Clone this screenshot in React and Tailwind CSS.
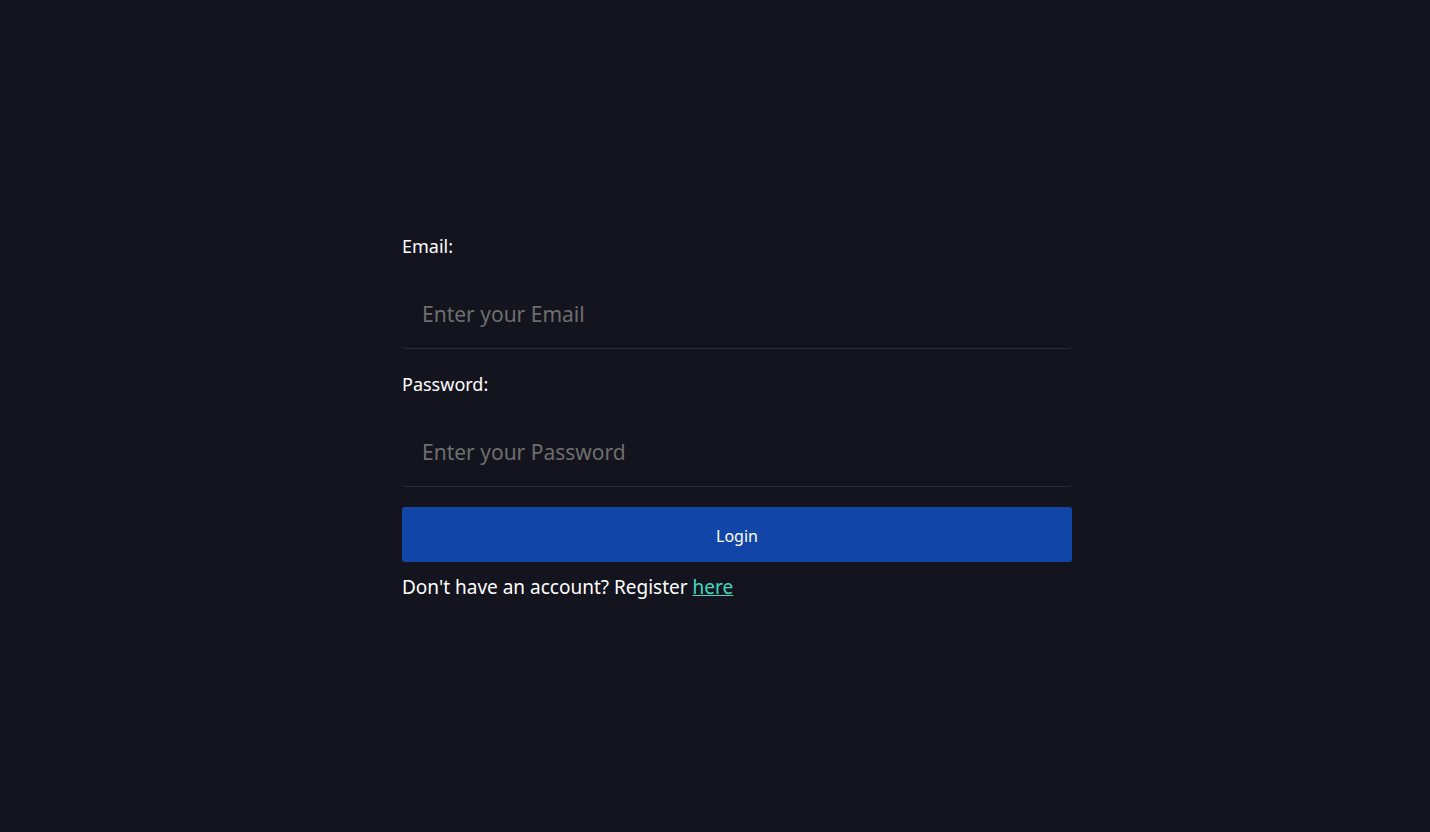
import React, { useState } from 'react';

const Login = () => {
  const [formData, setFormData] = useState({ email: '', password: '' });

  const handleInputChange = (e) => {
    const { name, value } = e.target;
    setFormData(prev => ({ ...prev, [name]: value }));
  };

  const handleSubmit = (e) => {
    e.preventDefault();
  };

  return (
    <div className="min-h-screen bg-[#14141e] flex items-center justify-center pl-[44px] font-['Noto_Sans',sans-serif]">
      <form onSubmit={handleSubmit} className="w-[670px] flex flex-col">
        <label className="text-white text-[18px] leading-6 mb-[22px]">Email:</label>
        <input
          type="email"
          name="email"
          value={formData.email}
          onChange={handleInputChange}
          placeholder="Enter your Email"
          className="h-[69px] px-5 bg-transparent text-white text-[21px] border-b border-[#2a2a38] rounded-[4px] outline-none placeholder:text-[#6e6e6e]"
        />

        <label className="text-white text-[18px] leading-6 mt-[23px] mb-[22px]">Password:</label>
        <input
          type="password"
          name="password"
          value={formData.password}
          onChange={handleInputChange}
          placeholder="Enter your Password"
          className="h-[69px] px-5 bg-transparent text-white text-[21px] border-b border-[#2a2a38] rounded-[4px] outline-none placeholder:text-[#6e6e6e]"
        />

        <button
          type="submit"
          className="mt-5 h-[55px] pt-[3px] bg-[#1146a8] text-white text-[16px] rounded-[3px]"
        >
          Login
        </button>

        <p className="mt-[13px] text-white text-[19px] leading-6">
          Don't have an account? Register{' '}
          <a href="#" className="text-[#40d9c0] underline">here</a>
        </p>
      </form>
    </div>
  );
};

export default Login;
